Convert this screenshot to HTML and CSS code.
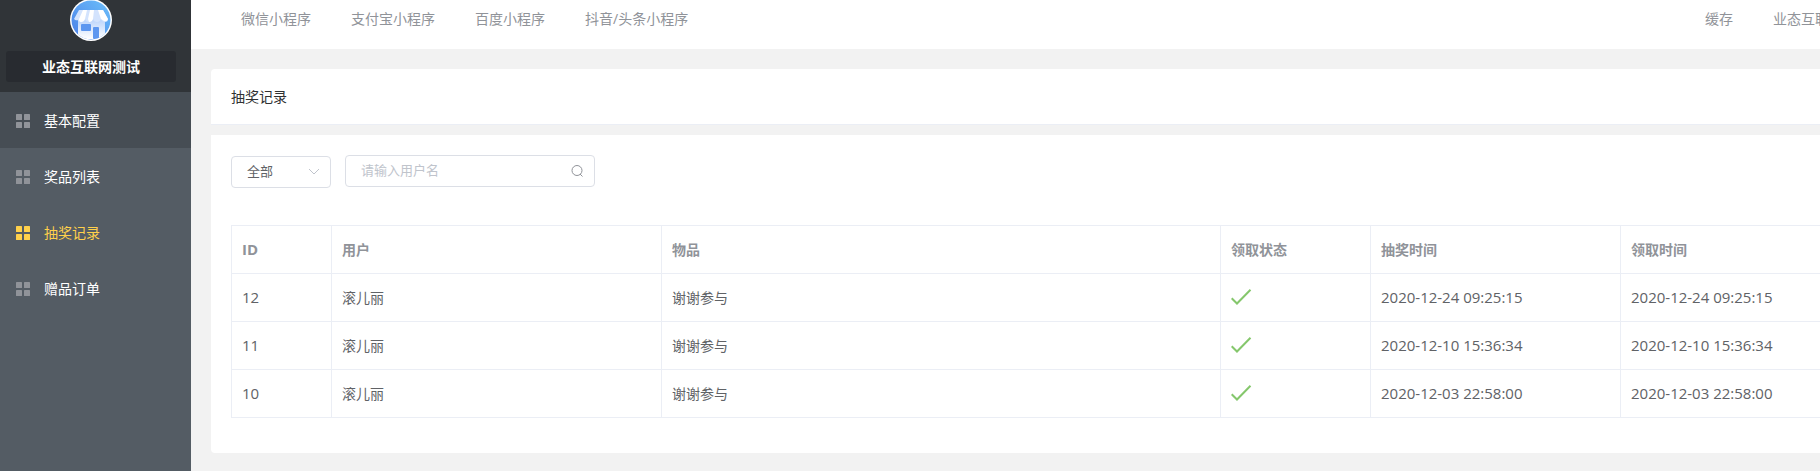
FILE: index.html
```html
<!DOCTYPE html>
<html lang="zh-CN">
<head>
    <meta charset="UTF-8">
    <meta name="viewport" content="width=device-width, initial-scale=1.0">
    <title>抽奖记录</title>
    <link rel="stylesheet" href="styles.css">
</head>
<body>
<!-- shared icons -->
<svg class="icon-defs" width="0" height="0">
    <symbol id="icon-menu" viewBox="0 0 14 14">
        <rect x="0" y="0" width="6" height="6" rx="0.6"/>
        <rect x="8" y="0" width="6" height="6" rx="0.6"/>
        <rect x="0" y="8" width="6" height="6" rx="0.6"/>
        <rect x="8" y="8" width="6" height="6" rx="0.6"/>
    </symbol>
    <symbol id="icon-check" viewBox="0 0 22 18">
        <path d="M0.700 10.300L6 15.500L19.500 1.700"/>
    </symbol>
</svg>

<div class="layout">
    <aside class="sidebar">
        <div class="shop">
            <svg class="shop-logo" viewBox="0 0 42 42">
                <defs>
                    <linearGradient id="sky" x1="0" y1="1" x2="1" y2="0">
                        <stop offset="0" stop-color="#4a7fe8"/>
                        <stop offset="1" stop-color="#6cc0fa"/>
                    </linearGradient>
                    <linearGradient id="wall" x1="0" y1="0" x2="0" y2="1">
                        <stop offset="0" stop-color="#b9d3fb"/>
                        <stop offset="1" stop-color="#ffffff"/>
                    </linearGradient>
                    <clipPath id="round"><circle cx="21" cy="21" r="19.5"/></clipPath>
                </defs>
                <circle cx="21" cy="21" r="21" fill="#fff"/>
                <circle cx="21" cy="21" r="19.5" fill="url(#sky)"/>
                <g clip-path="url(#round)">
                    <path d="M8 20H35V40H8Z" fill="url(#wall)"/>
                    <path d="M9 11H33L38 20Q38 23 35 23Q32 23 31 20Q30 23 27 23Q24 23 23 20Q22 23 19 23Q16 23 15 20Q14 23 11 23Q8 23 7.500 21Q6 22 4 20Z" fill="#d3e3fd"/>
                    <path d="M13 11H17L15 20Q14 23 11 23Q9 23 9 20ZM20 11H24L23 20Q22 23 19 23L18 20ZM28 11H33L38 20Q37 23 34 22L31 20Z" fill="#fff"/>
                    <rect x="11" y="25" width="10" height="7" rx="1" fill="#5d97f0"/>
                    <rect x="23" y="28" width="6" height="12" rx="1" fill="#5d97f0"/>
                </g>
            </svg>
            <div class="shop-name">业态互联网测试</div>
        </div>
        <nav class="menu">
            <a href="#" class="menu-item hover"><svg class="menu-icon"><use href="#icon-menu"/></svg>基本配置</a>
            <a href="#" class="menu-item"><svg class="menu-icon"><use href="#icon-menu"/></svg>奖品列表</a>
            <a href="#" class="menu-item active"><svg class="menu-icon"><use href="#icon-menu"/></svg>抽奖记录</a>
            <a href="#" class="menu-item"><svg class="menu-icon"><use href="#icon-menu"/></svg>赠品订单</a>
        </nav>
    </aside>

    <div class="content">
        <header class="topbar">
            <a href="#">微信小程序</a>
            <a href="#">支付宝小程序</a>
            <a href="#">百度小程序</a>
            <a href="#">抖音/头条小程序</a>
            <a href="#" class="right">缓存</a>
            <a href="#">业态互联网测试</a>
        </header>

        <main>
            <h1 class="card-title">抽奖记录</h1>
            <section class="card">
                <form class="filters">
                    <div class="select-box">
                        <select aria-label="领取状态">
                            <option>全部</option>
                        </select>
                        <svg class="arrow" viewBox="0 0 12 8"><path d="M1 1L6 6L11 1"/></svg>
                    </div>
                    <div class="search-box">
                        <input type="text" aria-label="用户名" placeholder="请输入用户名">
                        <button type="button" aria-label="搜索">
                            <svg viewBox="0 0 12 12"><circle cx="6" cy="5.500" r="5"/><path d="M9 9L11.500 11.500"/></svg>
                        </button>
                    </div>
                </form>

                <table>
                    <colgroup>
                        <col class="col-id">
                        <col class="col-user">
                        <col>
                        <col class="col-status">
                        <col class="col-time">
                        <col class="col-time">
                    </colgroup>
                    <thead>
                        <tr>
                            <th class="num">ID</th>
                            <th>用户</th>
                            <th>物品</th>
                            <th>领取状态</th>
                            <th>抽奖时间</th>
                            <th>领取时间</th>
                        </tr>
                    </thead>
                    <tbody>
                        <tr>
                            <td class="num">12</td>
                            <td>滚儿丽</td>
                            <td>谢谢参与</td>
                            <td><svg class="check"><use href="#icon-check"/></svg></td>
                            <td class="num">2020-12-24 09:25:15</td>
                            <td class="num">2020-12-24 09:25:15</td>
                        </tr>
                        <tr>
                            <td class="num">11</td>
                            <td>滚儿丽</td>
                            <td>谢谢参与</td>
                            <td><svg class="check"><use href="#icon-check"/></svg></td>
                            <td class="num">2020-12-10 15:36:34</td>
                            <td class="num">2020-12-10 15:36:34</td>
                        </tr>
                        <tr>
                            <td class="num">10</td>
                            <td>滚儿丽</td>
                            <td>谢谢参与</td>
                            <td><svg class="check"><use href="#icon-check"/></svg></td>
                            <td class="num">2020-12-03 22:58:00</td>
                            <td class="num">2020-12-03 22:58:00</td>
                        </tr>
                    </tbody>
                </table>
            </section>
        </main>
    </div>
</div>
</body>
</html>
```
FILE: styles.css
```css
* {
    box-sizing: border-box;
}
html {
    overflow-x: hidden;
}
body {
    margin: 0;
    font-family: "Open Sans", "Noto Sans CJK SC", sans-serif;
    font-size: 14px;
    line-height: 20px;
    color: #303133;
    background-color: #f2f2f2;
}
a {
    text-decoration: none;
}
.icon-defs {
    display: none;
}
.layout {
    display: flex;
    min-width: 1911px;
    min-height: 100vh;
}

/* sidebar */
.sidebar {
    flex: none;
    width: 191px;
    background-color: #545c64;
}
.shop {
    display: flow-root;
    height: 92px;
    padding: 0 15px 0 6px;
    background-color: #303438;
    text-align: center;
}
.shop-logo {
    display: block;
    width: 42px;
    height: 42px;
    margin: -1px auto 10px;
}
.shop-name {
    height: 31px;
    line-height: 31px;
    border-radius: 3px;
    background-color: #282b30;
    color: #fff;
    font-weight: bold;
}
.menu-item {
    display: flex;
    align-items: center;
    height: 56px;
    padding: 2px 0 0 16px;
    gap: 14px;
    color: #fff;
}
.menu-item.hover,
.menu-item:hover {
    background-color: #464d54;
}
.menu-icon {
    width: 14px;
    height: 14px;
    fill: #909399;
}
.menu-item.active {
    color: #ffd04b;
}
.menu-item.active .menu-icon {
    fill: #ffd04b;
}

/* top bar */
.content {
    flex: 1;
    min-width: 0;
}
.topbar {
    display: flex;
    align-items: center;
    gap: 40px;
    height: 49px;
    padding: 0 40px 11px 50px;
    background-color: #fff;
}
.topbar a {
    color: #909399;
}
.topbar .right {
    margin-left: auto;
}

/* cards */
main {
    padding: 20px;
}
.card-title {
    margin: 0 0 10px;
    padding: 18px 20px 17px;
    font-size: 14px;
    font-weight: normal;
    background-color: #fff;
    border-bottom: 1px solid #ebeef5;
    border-radius: 4px 4px 0 0;
}
.card {
    padding: 20px 20px 35px;
    background-color: #fff;
    border-radius: 0 0 4px 4px;
}
.filters {
    display: flex;
    gap: 14px;
    margin-bottom: 37px;
}
.select-box,
.search-box {
    position: relative;
    height: 32px;
}
.select-box {
    width: 100px;
    margin-top: 1px;
}
.search-box {
    width: 250px;
}
.filters select,
.filters input {
    display: block;
    width: 100%;
    height: 32px;
    padding: 0 15px 2px;
    font-family: inherit;
    font-size: 13px;
    color: #606266;
    background-color: #fff;
    border: 1px solid #dcdfe6;
    border-radius: 4px;
    outline: none;
    appearance: none;
}
.filters input::placeholder {
    color: #c0c4cc;
}
.filters svg {
    fill: none;
    stroke: #c0c4cc;
}
.arrow {
    position: absolute;
    top: 12px;
    right: 11px;
    width: 12px;
    height: 8px;
    pointer-events: none;
}
.search-box button {
    position: absolute;
    top: 10px;
    right: 12px;
    padding: 0;
    border: none;
    background: none;
    cursor: pointer;
}
.search-box svg {
    display: block;
    width: 12px;
    height: 12px;
    stroke: #909399;
}

/* table */
table {
    width: 100%;
    table-layout: fixed;
    border-collapse: collapse;
}
.col-id {
    width: 100px;
}
.col-user {
    width: 330px;
}
.col-status {
    width: 150px;
}
.col-time {
    width: 250px;
}
th, td {
    height: 48px;
    padding: 0 10px;
    border: 1px solid #ebeef5;
    text-align: left;
    color: #606266;
}
th {
    color: #909399;
    font-weight: bold;
}
.num {
    padding-bottom: 2px;
    font-size: 15px;
}
.check {
    display: block;
    width: 22px;
    height: 18px;
    margin-bottom: 2px;
    fill: none;
    stroke: #85c76c;
    stroke-width: 2;
}
```
